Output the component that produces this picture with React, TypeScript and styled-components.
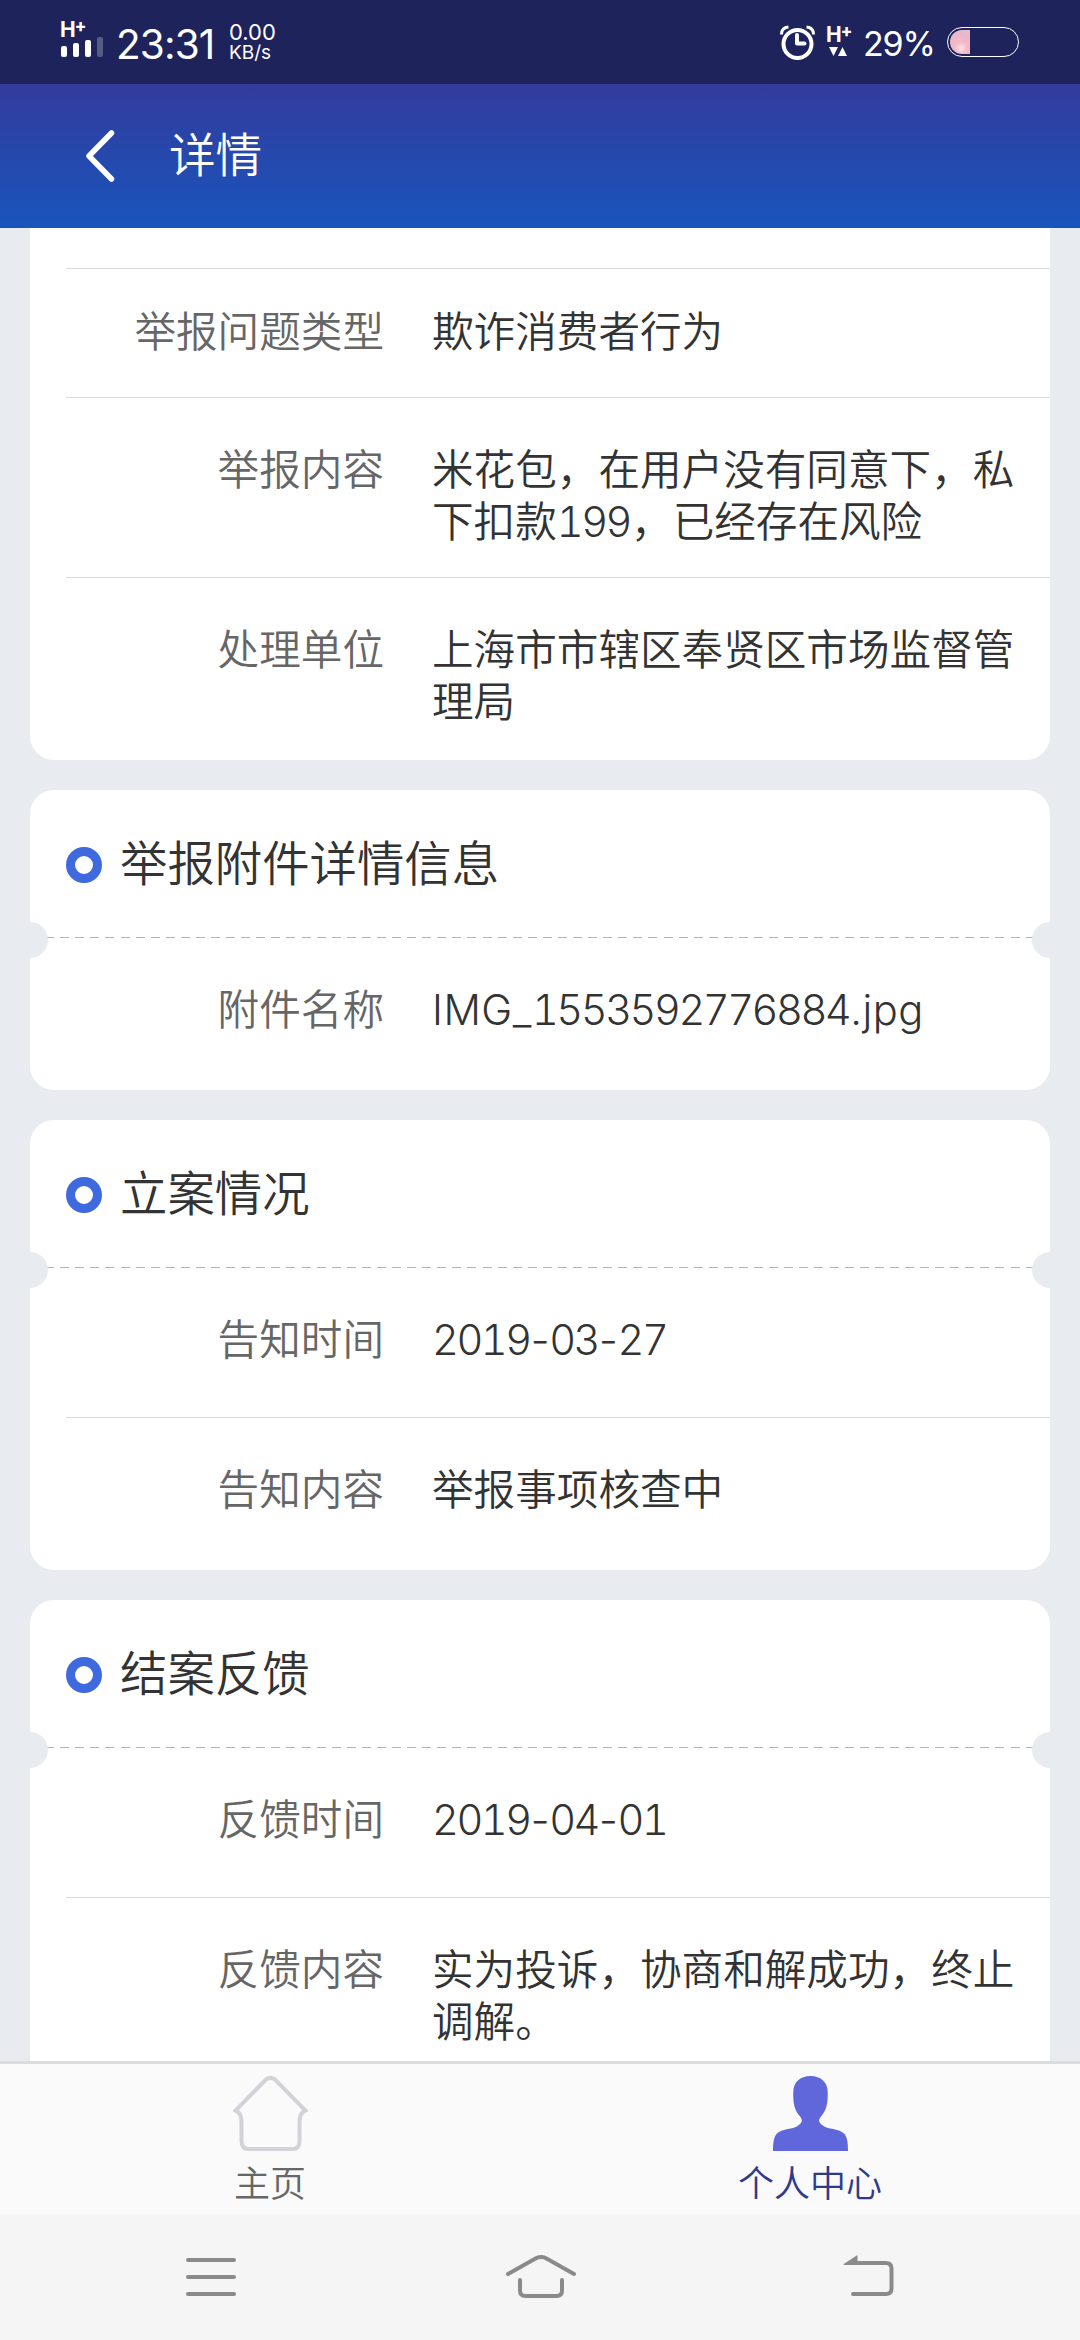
import React from 'react';
import styled, { createGlobalStyle } from 'styled-components';

const GlobalStyle = createGlobalStyle`
  * { box-sizing: border-box; }
  body {
    margin: 0;
    background: #e8ebf0;
    font-family: Inter, 'Noto Sans CJK SC', sans-serif;
    font-weight: 350;
    color: #333;
  }
  svg { display: block; }
`;

const Screen = styled.div`
  display: flex;
  flex-direction: column;
  width: 1080px;
  height: 2340px;
  overflow: hidden;
`;

const StatusBar = styled.div`
  display: flex;
  justify-content: space-between;
  height: 84px;
  flex: none;
  padding: 0 61px 0 60px;
  background: #1e235b;
  color: #fff;
`;

const StatusGroup = styled.div`
  display: flex;
  align-items: flex-start;
`;

const Network = styled.div<{ $top: number }>`
  display: flex;
  flex-direction: column;
  width: 44px;
  padding-top: ${(p) => p.$top}px;
`;

const NetworkType = styled.span`
  display: flex;
  height: 15px;
  font-size: 21px;
  line-height: 15px;
  font-weight: 700;
`;

const Plus = styled.span`
  font-size: 17px;
  line-height: 9px;
  font-weight: 800;
  margin-left: -1px;
`;

const Clock = styled.span`
  width: 112px;
  padding-left: 12px;
  margin-top: 20px;
  font-size: 40.5px;
  line-height: 49px;
  font-weight: 400;
  white-space: nowrap;
  letter-spacing: -0.9px;
`;

const Speed = styled.span`
  display: flex;
  flex-direction: column;
  margin: 22px 0 0 13px;
  font-size: 22px;
  line-height: 21px;
  font-weight: 400;
`;

const SpeedUnit = styled.span`
  font-size: 19px;
  line-height: 20px;
`;

const Percent = styled.span`
  width: 84px;
  margin: 23px 0 0 -7px;
  font-size: 34px;
  line-height: 41px;
  font-weight: 400;
  white-space: nowrap;
  letter-spacing: -1.2px;
`;

const Battery = styled.div`
  width: 72px;
  height: 30px;
  margin-top: 27px;
  padding: 2px;
  border: 1.5px solid #fff;
  border-radius: 15px;
`;

const BatteryLevel = styled.div`
  width: 20px;
  height: 24px;
  border-radius: 12px 0 0 12px;
  background: radial-gradient(circle at 11px 18px, #ffe3e8 0, #f5b9c8 6px, #eab6c9 14px, #dcc3cf 20px);
`;

const AlarmIcon = styled.svg`
  margin: 25px 10px 0 0;
`;

const Header = styled.header`
  display: flex;
  align-items: center;
  height: 144px;
  flex: none;
  padding-left: 85px;
  gap: 54px;
  background: linear-gradient(#333b9c, #1955bd);
  color: #fff;
`;

const HeaderTitle = styled.h1`
  margin: 0 0 3px;
  font-size: 46.6px;
  line-height: 60px;
  font-weight: 350;
`;

const Content = styled.main`
  display: flex;
  flex-direction: column;
  gap: 30px;
  height: 1833px;
  flex: none;
  padding: 0 30px;
  overflow: hidden;
  background: #e8ebf0;
`;

const Card = styled.section<{ $continued?: boolean }>`
  flex: none;
  background: #fff;
  border-radius: ${(p) => (p.$continued ? '0 0 24px 24px' : '24px')};
`;

const CardHead = styled.div`
  display: flex;
  align-items: center;
  height: 148px;
  padding: 2px 0 0 36px;
  gap: 18px;
  background: repeating-linear-gradient(90deg, #b0b4b6 0 9px, transparent 9px 15.085px) bottom / 100% 1px no-repeat;
`;

const CardTitle = styled.h2`
  margin: 0 0 2px;
  font-size: 47.4px;
  line-height: 60px;
  font-weight: 350;
`;

const Ring = styled.i`
  width: 36px;
  height: 36px;
  border: 9px solid #3f6adf;
  border-radius: 50%;
`;

const CardBody = styled.div`
  position: relative;
`;

const Notch = styled.i<{ $side: 'left' | 'right' }>`
  position: absolute;
  z-index: 1;
  top: -16px;
  ${(p) => p.$side}: 0;
  width: 18px;
  height: 36px;
  background: #e8ebf0;
  border-radius: ${(p) => (p.$side === 'left' ? '0 18px 18px 0' : '18px 0 0 18px')};
`;

const Spacer = styled.div`
  height: 40px;
`;

const Row = styled.div<{ $top: number; $bottom: number; $line?: boolean }>`
  display: flex;
  gap: 48px;
  margin-left: 36px;
  padding: ${(p) => p.$top}px 34px ${(p) => p.$bottom}px 0;
  border-top: ${(p) => (p.$line ? '1px solid #dadada' : '0')};
  font-size: 41.6px;
  line-height: 52px;
`;

const Label = styled.span`
  width: 318px;
  flex: none;
  text-align: right;
  color: #666;
`;

const Value = styled.div`
  width: 586px;
  flex: none;
`;

const Line = styled.div`
  display: flex;
  height: 52px;
  white-space: nowrap;
`;

const Digits = styled.span`
  font-variant-numeric: tabular-nums;
  letter-spacing: -2.5px;
  padding-right: 1px;
`;

const Hyphen = styled.span`
  width: 18.5px;
  text-align: center;
`;

const Words = styled.span`
  letter-spacing: 0;
`;

const Latin = styled(Words)`
  letter-spacing: 0.5px;
`;

const TabBar = styled.nav`
  display: flex;
  height: 153px;
  flex: none;
  border-top: 3px solid #dcdcdc;
  background: #fafafa;
`;

const Tab = styled.div<{ $active?: boolean }>`
  display: flex;
  flex: 1;
  flex-direction: column;
  align-items: center;
  gap: 11px;
  padding-top: 12px;
  font-size: 36px;
  line-height: 44px;
  color: ${(p) => (p.$active ? '#2f3a8c' : '#666')};
`;

const SystemNav = styled.div`
  display: flex;
  align-items: center;
  justify-content: space-between;
  height: 126px;
  flex: none;
  padding: 0 183px 0 184px;
  background: #f5f5f5;
`;

type Item = { label: string; lines: string[]; top: number; bottom: number };

/* Digits are set on a fixed pitch, so every line is split into runs. */
const partFor = (run: string) => {
  if (/^\d+$/.test(run)) return Digits;
  if (run === '-') return Hyphen;
  return /[A-Za-z]/.test(run) ? Latin : Words;
};

const TextLine = ({ text }: { text: string }) => (
  <Line>
    {text
      .split(/(\d+|-)/)
      .filter(Boolean)
      .map((run, i) => {
        const Part = partFor(run);
        return <Part key={i}>{run}</Part>;
      })}
  </Line>
);

const Rows = ({ items, lineFirst }: { items: Item[]; lineFirst?: boolean }) => (
  <>
    {items.map((item, i) => (
      <Row key={item.label} $top={item.top} $bottom={item.bottom} $line={lineFirst || i > 0}>
        <Label>{item.label}</Label>
        <Value>
          {item.lines.map((line) => (
            <TextLine key={line} text={line} />
          ))}
        </Value>
      </Row>
    ))}
  </>
);

const Section = ({ title, items }: { title: string; items: Item[] }) => (
  <Card>
    <CardHead>
      <Ring />
      <CardTitle>{title}</CardTitle>
    </CardHead>
    <CardBody>
      <Notch $side="left" />
      <Notch $side="right" />
      <Rows items={items} />
    </CardBody>
  </Card>
);

const reportItems: Item[] = [
  { label: '举报问题类型', lines: ['欺诈消费者行为'], top: 37, bottom: 39 },
  { label: '举报内容', lines: ['米花包，在用户没有同意下，私', '下扣款199，已经存在风险'], top: 46, bottom: 29 },
  { label: '处理单位', lines: ['上海市市辖区奉贤区市场监督管', '理局'], top: 46, bottom: 32 },
];

const attachmentItems: Item[] = [
  { label: '附件名称', lines: ['IMG_1553592776884.jpg'], top: 46, bottom: 54 },
];

const filingItems: Item[] = [
  { label: '告知时间', lines: ['2019-03-27'], top: 46, bottom: 51 },
  { label: '告知内容', lines: ['举报事项核查中'], top: 46, bottom: 54 },
];

const feedbackItems: Item[] = [
  { label: '反馈时间', lines: ['2019-04-01'], top: 46, bottom: 51 },
  { label: '反馈内容', lines: ['实为投诉，协商和解成功，终止', '调解。'], top: 46, bottom: 54 },
];

export default function App() {
  return (
    <Screen>
      <GlobalStyle />
      <StatusBar>
        <StatusGroup>
          <Network $top={22}>
            <NetworkType>H<Plus>+</Plus></NetworkType>
            <svg width="44" height="21" fill="#fff">
              <rect x="1" y="9" width="6" height="11" rx="2" />
              <rect x="13" y="6" width="6" height="14" rx="2" />
              <rect x="25" y="3" width="6" height="17" rx="2" />
              <rect x="37" y="0" width="6" height="20" rx="2" opacity=".25" />
            </svg>
          </Network>
          <Clock>23:31</Clock>
          <Speed>0.00<SpeedUnit>KB/s</SpeedUnit></Speed>
        </StatusGroup>
        <StatusGroup>
          <AlarmIcon width="36" height="36" viewBox="0 0 36 36" fill="none" stroke="#fff">
            <circle cx="17.5" cy="19" r="14" strokeWidth="4" />
            <path d="M17 10v8.500h7.500" strokeWidth="4" strokeLinecap="round" strokeLinejoin="round" />
            <path d="M1.500 9.500Q1.500 2.500 8.500 2M33.500 9.500Q33.500 2.500 26.500 2" strokeWidth="3" />
          </AlarmIcon>
          <Network $top={27}>
            <NetworkType>H<Plus>+</Plus></NetworkType>
            <svg width="24" height="15" fill="#fff">
              <path d="M3 5h9l-4.500 9zM12 14h9l-4.500-9z" />
            </svg>
          </Network>
          <Percent>29%</Percent>
          <Battery><BatteryLevel /></Battery>
        </StatusGroup>
      </StatusBar>

      <Header>
        <svg width="30" height="54" viewBox="0 0 30 54" fill="none" stroke="#fff" strokeWidth="5.500" strokeLinecap="round" strokeLinejoin="round">
          <path d="M26.500 4 4 27 26.500 50" />
        </svg>
        <HeaderTitle>详情</HeaderTitle>
      </Header>

      <Content>
        <Card $continued>
          <Spacer />
          <Rows items={reportItems} lineFirst />
        </Card>
        <Section title="举报附件详情信息" items={attachmentItems} />
        <Section title="立案情况" items={filingItems} />
        <Section title="结案反馈" items={feedbackItems} />
      </Content>

      <TabBar>
        <Tab>
          <svg width="75" height="75" viewBox="0 0 75 75" fill="none" stroke="#d2d2d8" strokeWidth="4">
            <path d="M33 3.500Q37.500 .5 42 3.500L72.500 34.500Q66.500 36.500 66.500 46V65Q66.500 73 59.500 73H15.500Q8.500 73 8.500 65V46Q8.500 36.500 2.500 34.500Z" />
          </svg>
          主页
        </Tab>
        <Tab $active>
          <svg width="75" height="75" viewBox="0 0 75 75" fill="#6067db">
            <path d="M37.500 0C27 0 20.300 6.500 20.300 16C19.800 27 22 34.500 25.500 38.500C29.500 43.200 30 45.500 26.500 48.500C19.500 54.500 10 51.800 4 57.500C1 60.500 0 66 0 75H75C75 66 74 60.500 71 57.500C65 51.800 55.500 54.500 48.500 48.500C45 45.500 45.500 43.200 49.500 38.500C53 34.500 55.200 27 54.700 16C54.700 6.500 48 0 37.500 0Z" />
          </svg>
          个人中心
        </Tab>
      </TabBar>

      <SystemNav>
        <svg width="54" height="44" viewBox="0 0 54 44" stroke="#8a8a8a" strokeWidth="4" strokeLinecap="round">
          <path d="M4 5H50M4 22H50M4 39H50" />
        </svg>
        <svg width="72" height="44" viewBox="0 0 72 44" fill="none" stroke="#8a8a8a" strokeWidth="4" strokeLinecap="round">
          <path d="M3 19 30.500 3.500Q36 .5 41.500 3.500L69 19M15 25V35.500Q15 41 20.500 41H51.500Q57 41 57 35.500V25" />
        </svg>
        <svg width="54" height="44" viewBox="0 0 54 44" fill="none" stroke="#8a8a8a" strokeWidth="4" strokeLinecap="round">
          <path d="M8 8H43Q48.500 8 48.500 13.500V33.500Q48.500 39 43 39H10" />
          <path d="M0 9.500 14.500 0V10H2Z" fill="#8a8a8a" stroke="none" />
        </svg>
      </SystemNav>
    </Screen>
  );
}
